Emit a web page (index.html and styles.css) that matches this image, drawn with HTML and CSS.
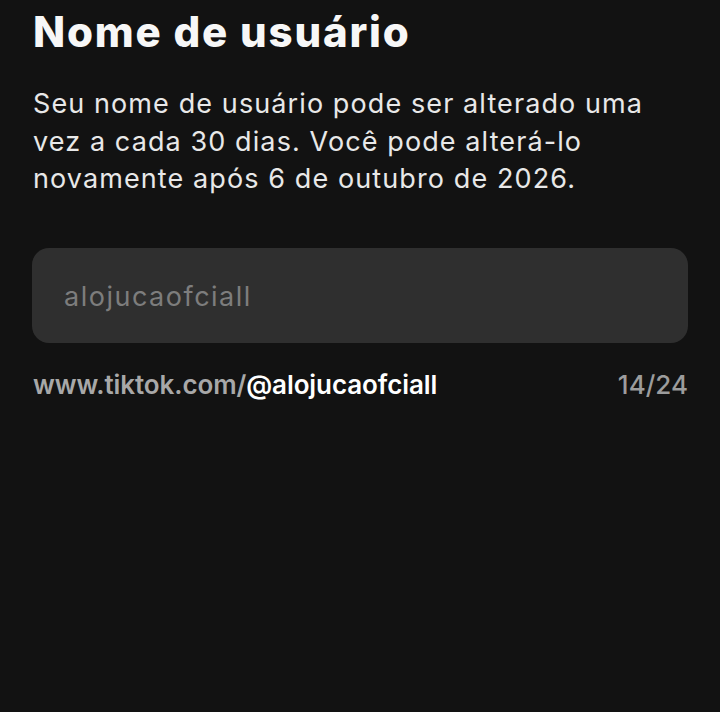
FILE: index.html
```html
<!DOCTYPE html>
<html lang="pt-BR">
<head>
   <meta charset="UTF-8">
   <meta name="viewport" content="width=device-width, initial-scale=1.0">
   <title>Nome de usuário</title>
   <link rel="stylesheet" href="styles.css">
</head>
<body>
   <div class="page">
       <h1 class="title">Nome de usuário</h1>
       <p class="description">Seu nome de usuário pode ser alterado uma vez a cada 30 dias. Você pode alterá-lo novamente após 6 de outubro de 2026.</p>

       <div class="field">
           <input type="text" class="field-input" placeholder="alojucaofciall">
       </div>

       <div class="field-info">
           <span class="profile-link">www.tiktok.com/<span class="handle">@alojucaofciall</span></span>
           <span class="counter">14/24</span>
       </div>
   </div>
</body>
</html>
```

FILE: styles.css
```css
body {
    margin: 0;
    background-color: #121212;
    font-family: Inter, "Liberation Sans", sans-serif;
    color: #f2f2f2;
}

.page {
    width: 720px;
    height: 712px;
    padding: 8px 32px 0 33px;
    box-sizing: border-box;
}

.title {
    margin: 0;
    font-size: 42px;
    font-weight: 800;
    line-height: 48px;
    letter-spacing: 1.8px;
    color: #f7f7f7;
}

.description {
    max-width: 645px;
    margin: 29px 0 0;
    font-size: 27px;
    line-height: 37.5px;
    letter-spacing: 1.1px;
    color: #e8e8e8;
}

.field {
    margin-top: 50px;
    height: 95px;
    margin-left: -1px;
    background-color: #2f2f2f;
    border-radius: 17px;
    display: flex;
    align-items: center;
    padding: 3px 31px 0 32px;
    box-sizing: border-box;
}

.field-input {
    width: 100%;
    border: none;
    outline: none;
    background: transparent;
    font-family: Inter, "Liberation Sans", sans-serif;
    font-size: 27px;
    letter-spacing: 1.5px;
    color: #f2f2f2;
    padding: 0;
}

.field-input::placeholder {
    color: #7d7d7d;
}

.field-info {
    display: flex;
    justify-content: space-between;
    align-items: baseline;
    margin-top: 26px;
    font-size: 26px;
    font-weight: 600;
}

.profile-link {
    color: #a8a8a8;
    letter-spacing: -0.1px;
}

.handle {
    color: #ffffff;
}

.counter {
    color: #9c9c9c;
    font-weight: 500;
}
```
